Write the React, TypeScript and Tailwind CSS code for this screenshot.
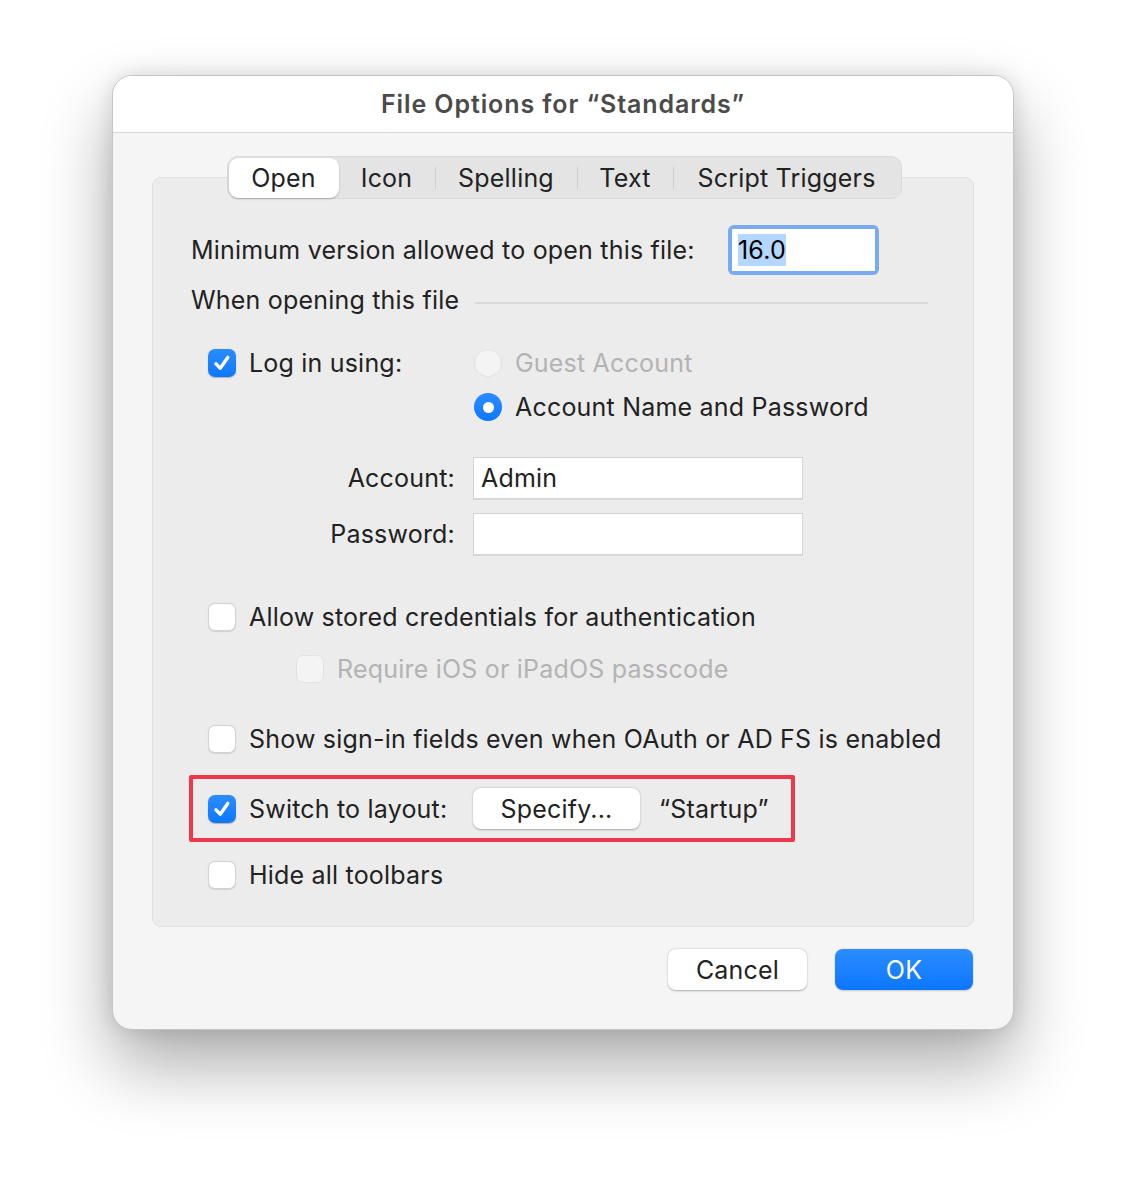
import React from "react";

const font = { fontFamily: 'Inter, "Liberation Sans", Arial, sans-serif' };

function Check({ checked, disabled }: { checked?: boolean; disabled?: boolean }) {
  if (checked) {
    return (
      <div className="w-[28px] h-[28px] rounded-[7px] bg-gradient-to-b from-[#2b8cff] to-[#0a78ff] flex items-center justify-center shrink-0 shadow-[0_0.5px_1px_rgba(0,0,0,0.25)]">
        <svg width="20" height="20" viewBox="0 0 20 20" fill="none">
          <path d="M4 10.8 L8.2 15.2 L15.8 4.4" stroke="white" strokeWidth="3.4" strokeLinecap="round" strokeLinejoin="round" />
        </svg>
      </div>
    );
  }
  return (
    <div
      className={
        "w-[28px] h-[28px] rounded-[7px] shrink-0 " +
        (disabled
          ? "bg-[#f4f4f4] border border-[#e2e2e2]"
          : "bg-white border border-[#d2d2d2] shadow-[0_0.5px_1px_rgba(0,0,0,0.12)]")
      }
    />
  );
}

function Radio({ checked, disabled }: { checked?: boolean; disabled?: boolean }) {
  if (checked) {
    return (
      <div className="w-[28px] h-[28px] rounded-full bg-gradient-to-b from-[#2b8cff] to-[#0a78ff] flex items-center justify-center shrink-0">
        <div className="w-[11px] h-[11px] rounded-full bg-white" />
      </div>
    );
  }
  return (
    <div
      className={
        "w-[28px] h-[28px] rounded-full shrink-0 " +
        (disabled ? "bg-[#f4f4f4] border border-[#e2e2e2]" : "bg-white border border-[#d2d2d2]")
      }
    />
  );
}

export default function App() {
  return (
    <div className="w-[1126px] h-[1178px] bg-white pt-[75px] pl-[112px]" style={font}>
      <div className="w-[902px] h-[955px] rounded-[20px] bg-[#f5f5f5] border border-[#c4c4c4] shadow-[0_35px_70px_rgba(0,0,0,0.33),0_0_20px_rgba(0,0,0,0.12)] overflow-hidden flex flex-col text-[#222] text-[25px] tracking-[0.2px] [&_span]:pt-[2px]">
        {/* Title bar */}
        <div className="h-[57px] shrink-0 bg-white border-b border-[#d6d6d6] flex items-center justify-center">
          <span className="font-semibold text-[#4b4b4b] text-[25px] tracking-[0.9px]">File Options for “Standards”</span>
        </div>

        {/* Body */}
        <div className="px-[39px] pt-[23px]">
          {/* Tabs */}
          <div className="flex justify-center relative z-10">
            <div className="h-[43px] rounded-[11px] bg-[#e4e4e4] border border-[#dadada] flex items-center p-[1px] ml-[2px]">
              <div className="h-[40px] w-[110px] rounded-[9px] bg-white shadow-[0_1px_2px_rgba(0,0,0,0.25)] flex items-center justify-center">
                <span>Open</span>
              </div>
              <div className="w-[96px] flex justify-center"><span>Icon</span></div>
              <div className="w-[1px] h-[22px] bg-[#cfcfcf]" />
              <div className="w-[141px] flex justify-center"><span>Spelling</span></div>
              <div className="w-[1px] h-[22px] bg-[#cfcfcf]" />
              <div className="w-[95px] flex justify-center"><span>Text</span></div>
              <div className="w-[1px] h-[22px] bg-[#cfcfcf]" />
              <div className="w-[226px] flex justify-center"><span>Script Triggers</span></div>
            </div>
          </div>

          {/* Group box */}
          <div className="-mt-[22px] h-[750px] rounded-[9px] bg-[#ececec] border border-[#e0e0e0] px-[38px] flex flex-col">
            {/* Min version */}
            <div className="mt-[47px] h-[50px] flex items-center">
              <span className="w-[537px] whitespace-nowrap">Minimum version allowed to open this file:</span>
              <div className="w-[151px] h-[50px] rounded-[6px] bg-[#79a9ee] p-[4px]">
                <div className="w-full h-full bg-white flex items-center pl-[6px]">
                  <div className="bg-[#b3d7ff] text-black h-[32px] flex items-center"><span>16.0</span></div>
                </div>
              </div>
            </div>

            {/* When opening */}
            <div className="mt-[10px] h-[30px] flex items-center">
              <span>When opening this file</span>
              <div className="ml-[16px] flex-1 h-[2px] bg-[#d9d9d9] mt-[6px] mr-[7px]" />
            </div>

            {/* Log in using */}
            <div className="mt-[34px] flex ml-[17px]">
              <div className="flex items-center h-[28px] gap-[13px] w-[266px]">
                <Check checked />
                <span>Log in using:</span>
              </div>
              <div className="flex flex-col gap-[16px]">
                <div className="flex items-center h-[28px] gap-[13px]">
                  <Radio disabled />
                  <span className="text-[#b3b3b3]">Guest Account</span>
                </div>
                <div className="flex items-center h-[28px] gap-[13px]">
                  <Radio checked />
                  <span>Account Name and Password</span>
                </div>
              </div>
            </div>

            {/* Account / Password */}
            <div className="mt-[36px] flex flex-col gap-[14px]">
              <div className="flex items-center h-[42px]">
                <span className="w-[264px] text-right">Account:</span>
                <div className="ml-[18px] w-[330px] h-[42px] bg-white border border-[#d4d4d4] shadow-[0_1px_0_rgba(0,0,0,0.08)] flex items-center pl-[7px]">
                  <span>Admin</span>
                </div>
              </div>
              <div className="flex items-center h-[42px]">
                <span className="w-[264px] text-right">Password:</span>
                <div className="ml-[18px] w-[330px] h-[42px] bg-white border border-[#d4d4d4] shadow-[0_1px_0_rgba(0,0,0,0.08)]" />
              </div>
            </div>

            {/* Allow stored */}
            <div className="mt-[48px] ml-[17px] flex items-center h-[28px] gap-[13px]">
              <Check />
              <span>Allow stored credentials for authentication</span>
            </div>
            <div className="mt-[24px] ml-[105px] flex items-center h-[28px] gap-[13px]">
              <Check disabled />
              <span className="text-[#b3b3b3]">Require iOS or iPadOS passcode</span>
            </div>

            {/* Show sign-in */}
            <div className="mt-[42px] ml-[17px] flex items-center h-[28px] gap-[13px] whitespace-nowrap">
              <Check />
              <span>Show sign-in fields even when OAuth or AD FS is enabled</span>
            </div>

            {/* Switch to layout (highlighted) */}
            <div className="mt-[22px] -ml-[2px] w-[606px] h-[67px] border-[4px] border-[#f2364a] rounded-[2px] flex items-center pl-[15px]">
              <div className="flex items-center gap-[13px] w-[265px]">
                <Check checked />
                <span>Switch to layout:</span>
              </div>
              <div className="w-[167px] h-[41px] rounded-[8px] bg-white shadow-[0_0.5px_2px_rgba(0,0,0,0.3)] flex items-center justify-center">
                <span>Specify...</span>
              </div>
              <span className="ml-[19px]">“Startup”</span>
            </div>

            {/* Hide toolbars */}
            <div className="mt-[19px] ml-[17px] flex items-center h-[28px] gap-[13px]">
              <Check />
              <span>Hide all toolbars</span>
            </div>
          </div>

          {/* Buttons */}
          <div className="mt-[22px] flex justify-end gap-[28px] pr-[1px]">
            <div className="w-[139px] h-[41px] rounded-[8px] bg-white shadow-[0_0.5px_2px_rgba(0,0,0,0.3)] flex items-center justify-center">
              <span>Cancel</span>
            </div>
            <div className="w-[138px] h-[41px] rounded-[8px] bg-gradient-to-b from-[#2a8cff] to-[#0a76ff] shadow-[0_0.5px_2px_rgba(0,0,0,0.2)] flex items-center justify-center text-white">
              <span>OK</span>
            </div>
          </div>
        </div>
      </div>
    </div>
  );
}
